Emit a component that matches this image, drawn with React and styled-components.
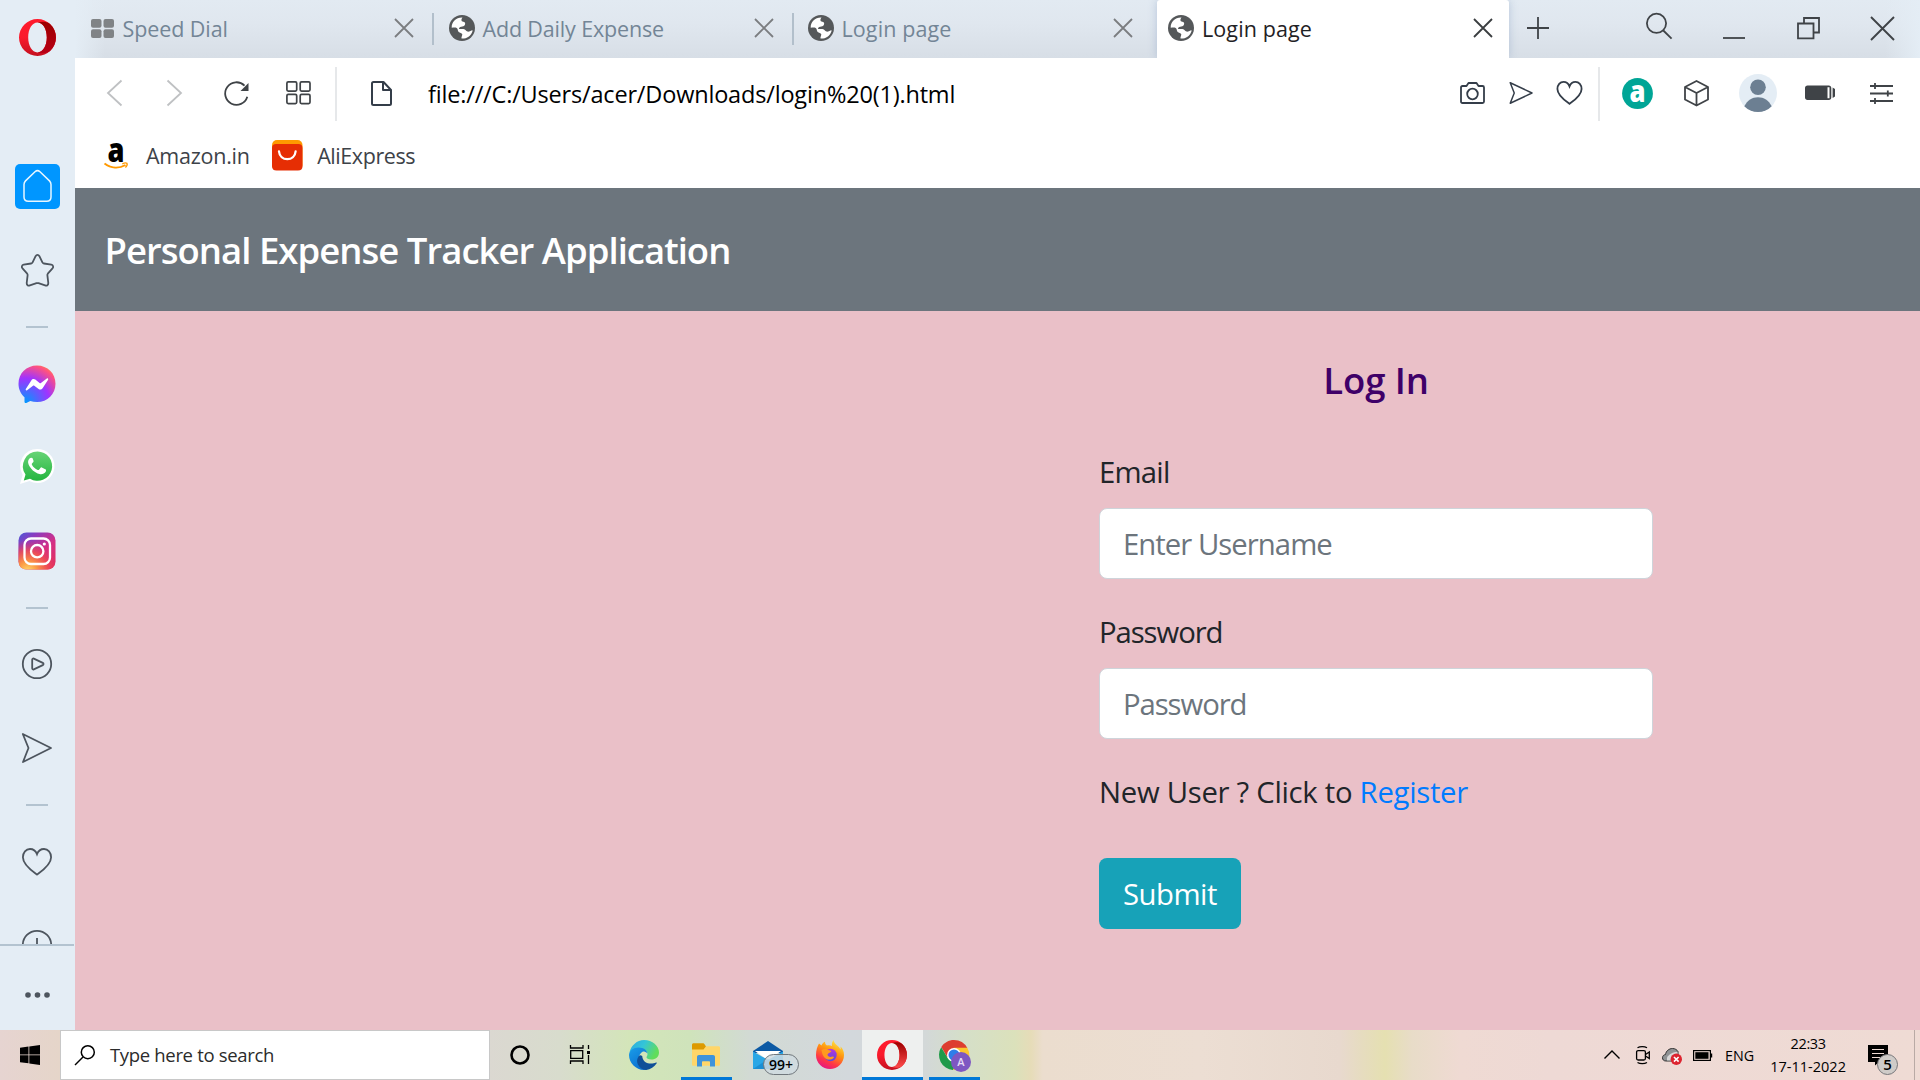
import React from "react";
import styled, { createGlobalStyle, css } from "styled-components";

const GlobalStyle = createGlobalStyle`
  *, *::before, *::after { box-sizing: border-box; }
  body {
    margin: 0;
    overflow: hidden;
    font-family: "Open Sans", "Noto Sans", "Liberation Sans", sans-serif;
    color: #212529;
  }
`;

/* ---------- layout ---------- */

const Screen = styled.div`
  display: flex;
  flex-direction: column;
  width: 1920px;
  height: 1080px;
  background: #e4edf5;
`;

const Browser = styled.div`
  display: flex;
  flex: 1;
  min-height: 0;
`;

const Main = styled.main`
  flex: 1;
  min-width: 0;
  display: flex;
  flex-direction: column;
`;

const Text = styled.span`
  white-space: pre;
  font-size: ${(p) => p.$size}px;
  line-height: ${(p) => p.$line || p.$size * 1.4}px;
  letter-spacing: ${(p) => p.$track || 0}px;
  color: ${(p) => p.$color || "#000"};
`;

const Glyph = styled.svg`
  display: block;
  flex: none;
  overflow: visible;
  margin-left: ${(p) => p.$gap || 0}px;
  margin-top: ${(p) => p.$drop || 0}px;
`;

const Icon = ({ w, h, box, gap, drop, color = "#3f4347", sw = 1.8, fill = "none", children }) => (
  <Glyph
    width={w}
    height={h}
    viewBox={box || `0 0 ${w} ${h}`}
    fill={fill}
    stroke={color}
    strokeWidth={sw}
    $gap={gap}
    $drop={drop}
  >
    {children}
  </Glyph>
);

/* ---------- sidebar ---------- */

const Sidebar = styled.aside`
  width: 75px;
  flex: none;
  display: flex;
  flex-direction: column;
  background: #e4edf5;
`;

const LogoSlot = styled.div`
  height: 143px;
  padding-top: 19px;
  display: flex;
  justify-content: center;
`;

const PanelList = styled.div`
  width: 74px;
  height: 801px;
  overflow: hidden;
  display: flex;
  flex-direction: column;
`;

const Slot = styled.div`
  height: ${(p) => p.$h || 84}px;
  flex: none;
  display: flex;
  align-items: center;
  justify-content: center;
`;

const Rule = styled.div`
  width: 22px;
  height: 2px;
  background: #b3c3d0;
`;

const HomeTile = styled.div`
  width: 45px;
  height: 45px;
  border-radius: 5px;
  background: #0096ff;
  display: grid;
  place-items: center;
`;

const SidebarFooter = styled.div`
  flex: 1;
  width: 74px;
  border-top: 2px solid #b3c3d0;
  display: flex;
  justify-content: center;
  padding-top: 46px;
`;

const OperaLogo = ({ w, h, id }) => (
  <Icon w={w} h={h} box="0 0 37 37" color="none">
    <defs>
      <linearGradient id={`${id}a`} x1="0" y1="0" x2="0" y2="1">
        <stop offset="0" stopColor="#ff1b2d" />
        <stop offset="0.5" stopColor="#fa1a2c" />
        <stop offset="1" stopColor="#c4101f" />
      </linearGradient>
      <linearGradient id={`${id}b`} x1="0" y1="0" x2="0" y2="1">
        <stop offset="0" stopColor="#9c0000" />
        <stop offset="1" stopColor={id === "side" ? "#b80016" : "#ff4b4b"} />
      </linearGradient>
    </defs>
    <path
      fill={`url(#${id}a)`}
      fillRule="evenodd"
      d="M18.500 0a18.500 18.500 0 1 0 0 37a18.500 18.500 0 1 0 0-37zM18.500 3.600c5.500 0 9.300 6.600 9.300 14.900s-3.800 14.900-9.300 14.900S9.200 26.800 9.200 18.500S13 3.600 18.500 3.600z"
    />
    <path
      fill={`url(#${id}b)`}
      d="M18.500 3.600C24 3.600 27.800 10.200 27.800 18.500S24 33.400 18.500 33.400C22.500 34.600 27.500 34.400 30.800 32.300A18.500 18.500 0 0 0 30.800 4.700C27.500 2.600 22.500 2.400 18.500 3.600z"
    />
  </Icon>
);

const Messenger = () => (
  <Icon w={38} h={38} color="none">
    <defs>
      <radialGradient id="msgr" cx="0.19" cy="0.99" r="1.09">
        <stop offset="0" stopColor="#09f" />
        <stop offset="0.6" stopColor="#a033ff" />
        <stop offset="0.93" stopColor="#ff5280" />
        <stop offset="1" stopColor="#ff7061" />
      </radialGradient>
    </defs>
    <path
      fill="url(#msgr)"
      d="M19 .5C8.400.5.500 8.300.500 18.700c0 5.500 2.300 10.200 6 13.500v4.500c0 1 .9 1.500 1.800 1.200l4-1.800c2 .6 4.300.900 6.700.900C29.600 37 37.500 29.100 37.500 18.700S29.600.5 19 .5z"
    />
    <path
      fill="#fff"
      d="M7.800 24.100 13.300 15.400c.9-1.400 2.700-1.700 4-.8l4.300 3.300c.4.300.9.300 1.300 0l5.900-4.400c.8-.6 1.800.3 1.300 1.200l-5.500 8.600c-.9 1.400-2.700 1.700-4 .8l-4.300-3.300c-.4-.3-.9-.3-1.300 0l-5.900 4.500c-.8.600-1.800-.3-1.300-1.200z"
    />
  </Icon>
);

const WhatsApp = () => (
  <Icon w={34} h={36} color="none">
    <defs>
      <linearGradient id="wa" x1="0" y1="0" x2="0" y2="1">
        <stop offset="0" stopColor="#67d475" />
        <stop offset="1" stopColor="#25b540" />
      </linearGradient>
    </defs>
    <path fill="#fff" d="M17.500 0a17 17 0 0 1 0 34c-3 0-5.600-.7-8-2L0 35l2.700-9.200A17 17 0 0 1 17.500 0z" />
    <path
      fill="url(#wa)"
      d="M17.500 2.600a14.600 14.600 0 1 1-7.500 27.100L3.800 31.500l1.700-6A14.600 14.600 0 0 1 17.500 2.600z"
    />
    <path
      fill="#fff"
      d="M12.600 9.300c-.4-.8-2.300-.8-3.100.2-1.400 1.500-1.800 3.500-1 5.700 2 4.800 6 8.300 11 9.800 2.200.6 5-.2 6.200-2.200.5-1 .4-2 .1-2.300l-4-2.100c-.6-.2-1 0-1.400.5l-1.400 1.800c-.4.400-.8.400-1.300.2-2.500-1.100-4.500-2.900-5.800-5.200-.2-.4-.2-.8.100-1.200l1.300-1.600c.3-.4.400-.8.200-1.200z"
    />
  </Icon>
);

const Instagram = () => (
  <Icon w={38} h={38} color="#fff" sw={2.300}>
    <defs>
      <linearGradient id="igBase" x1="0" y1="0" x2="0.9" y2="1">
        <stop offset="0" stopColor="#4a5bd8" />
        <stop offset="0.25" stopColor="#8a3cc0" />
        <stop offset="0.6" stopColor="#d42f86" />
        <stop offset="1" stopColor="#e02f5c" />
      </linearGradient>
      <radialGradient id="igGlow" cx="0.25" cy="1.05" r="0.85">
        <stop offset="0" stopColor="#ffdc6b" />
        <stop offset="0.3" stopColor="#fb9a45" />
        <stop offset="0.65" stopColor="#f2504f" stopOpacity="0.8" />
        <stop offset="1" stopColor="#e0306c" stopOpacity="0" />
      </radialGradient>
    </defs>
    <rect x=".5" y=".5" width="37" height="37" rx="8" fill="url(#igBase)" stroke="none" />
    <rect x=".5" y=".5" width="37" height="37" rx="8" fill="url(#igGlow)" stroke="none" />
    <rect x="6.500" y="6.500" width="25.500" height="25.500" rx="6.500" />
    <circle cx="19.200" cy="19.200" r="6.200" />
    <circle cx="26.300" cy="12" r="1.600" fill="#fff" stroke="none" />
  </Icon>
);

const SIDE = "#4d555e";
const HEART = "M15 26.600C11.500 24 .9 17.200.9 9.300.9 4.600 4 1 8 1c3.200 0 5.800 2 7 5.200C16.200 3 18.800 1 22 1c4 0 7.100 3.600 7.100 8.300 0 7.900-10.600 14.700-14.100 17.300z";
const PLANE = "M.8 1 29 15 1 29l5.500-14z";

const SideBar = () => (
  <Sidebar>
    <LogoSlot><OperaLogo w={37} h={37} id="side" /></LogoSlot>
    <PanelList>
      <Slot $h={86}>
        <HomeTile>
          <Icon w={29} h={32} color="#e8f6ff" sw={1.500}>
            <path d="M1 14.500c0-1.500.5-2.600 1.500-3.600l9.500-9.200c1.600-1.400 3.400-1.400 5 0l9.500 9.200c1 1 1.500 2.100 1.500 3.600V27c0 2.800-1.500 4.200-4.200 4.200H5.200C2.500 31.200 1 29.800 1 27z" />
          </Icon>
        </HomeTile>
      </Slot>
      <Slot $h={82}>
        <Icon w={33} h={33} color={SIDE} sw={1.800}>
          <path strokeLinejoin="round" d="M14.600 2.200c1-1.700 2.800-1.700 3.800 0l3 6.200c.3.600.8 1 1.500 1.100l7.400 1.200c1.900.4 2.500 2.300 1.200 3.700l-4.700 5.300c-.4.500-.5 1-.4 1.700l.9 7.600c.1 2-1.400 3.100-3.200 2.400l-6.600-2.200c-.7-.2-1.300-.2-2 0l-6.600 2.200c-1.800.7-3.300-.4-3.200-2.400l.9-7.600c.1-.7 0-1.200-.4-1.700l-4.700-5.300c-1.300-1.400-.7-3.300 1.200-3.700l7.400-1.200c.7-.1 1.200-.5 1.500-1.100z" />
        </Icon>
      </Slot>
      <Slot $h={31}><Rule /></Slot>
      <Slot $h={83}><Messenger /></Slot>
      <Slot><WhatsApp /></Slot>
      <Slot><Instagram /></Slot>
      <Slot $h={29}><Rule /></Slot>
      <Slot>
        <Icon w={30} h={30} color={SIDE} sw={1.800}>
          <circle cx="15" cy="15" r="14.200" />
          <path strokeLinejoin="round" d="M10.200 10.700c0-1 .8-1.500 1.600-1.100l9 4.300c1 .5 1 1.700 0 2.200l-9 4.300c-.8.400-1.600-.1-1.600-1.100z" />
        </Icon>
      </Slot>
      <Slot>
        <Icon w={30} h={30} color={SIDE} sw={1.800}><path strokeLinejoin="round" d={PLANE} /></Icon>
      </Slot>
      <Slot $h={29}><Rule /></Slot>
      <Slot $h={86}>
        <Icon w={30} h={28} color={SIDE} sw={1.800}><path d={HEART} /></Icon>
      </Slot>
      <Slot $h={79}>
        <Icon w={30} h={30} color={SIDE} sw={1.800}>
          <circle cx="15" cy="15" r="14.200" />
          <path d="M15 8v10" />
        </Icon>
      </Slot>
    </PanelList>
    <SidebarFooter>
      <Icon w={25} h={6} color="none" fill={SIDE}>
        <circle cx="3" cy="3" r="2.800" />
        <circle cx="12.500" cy="3" r="2.800" />
        <circle cx="22" cy="3" r="2.800" />
      </Icon>
    </SidebarFooter>
  </Sidebar>
);

/* ---------- tab strip ---------- */

const TabStrip = styled.header`
  height: 58px;
  display: flex;
  background: linear-gradient(90deg, #e4edf5 0, rgba(228, 237, 245, 0) 30px, rgba(228, 237, 245, 0) 1810px, #e4edf5 100%),
    linear-gradient(#e2eaf2 0, #e0e7ef 40%, #d7dee6 100%);
`;

const Tab = styled.div`
  width: ${(p) => p.$w}px;
  display: flex;
  align-items: center;
  padding: 0 ${(p) => p.$right}px 2px ${(p) => p.$left}px;
  ${(p) =>
    p.$active &&
    css`
      background: #fff;
      border-radius: 3px 3px 0 0;
      box-shadow: 0 0 8px rgba(130, 155, 190, 0.45);
      clip-path: inset(0 -10px 0 -10px);
    `}
`;

const TabTitle = styled(Text)`
  flex: 1;
  margin-left: ${(p) => p.$gap || 8}px;
  padding-top: 3px;
`;

const TabDivider = styled.i`
  width: 2px;
  height: 32px;
  margin-top: 13px;
  background: #b2bfcb;
`;

const Globe = () => (
  <Icon w={26} h={26} color="none">
    <circle cx="13" cy="13" r="13" fill="#55585a" />
    <path
      fill="#fff"
      d="M13.500 2.600c-.8 1-1.200 2-1 3 .3 1.300 1.600 1.200 2.600 1.400 1.300.3 1.200 1.700.8 2.700-.6 1.500-2.300 1.700-3.700 2-1.500.3-2.200 1-2.200 2.300l4.500 0c2.200.2 2.400 2 3.900 2.500 1.500.5 2.700-.6 4.700-1.300.5 0 .5.600.3 1.200-1.500 4.500-5.600 7.300-10.300 7.200-.6-.1-.8-.6-.6-1.200.3-1.300 1-2.300.7-3.300-.4-1.200-2.400-1.200-3.500-2.200-1.300-1.200-.6-3-2-3.900-1.500-.8-3.200-.4-5-.2C2.500 6.800 7 2.400 13.500 2.600z"
    />
  </Icon>
);

const Cross = ({ size = 18, h, color = "#7b7d80", sw = 1.800 }) => (
  <Icon w={size} h={h || size} box="0 0 18 18" color={color} sw={sw}>
    <path d="M0 0 18 18M18 0 0 18" />
  </Icon>
);

const WindowTools = styled.div`
  flex: 1;
  display: flex;
  align-items: flex-start;
  padding-left: 18px;
`;

const MUTED = "#738596";

const Tabs = () => (
  <TabStrip>
    <Tab $w={357} $left={16} $right={19}>
      <Icon w={23} h={19} color="none" fill="#808386">
        <rect width="10.500" height="8.700" rx="2" />
        <rect x="12.500" width="10.500" height="8.700" rx="2" />
        <rect y="10.300" width="10.500" height="8.700" rx="2" />
        <rect x="12.500" y="10.300" width="10.500" height="8.700" rx="2" />
      </Icon>
      <TabTitle $size={21.500} $gap={8.500} $track={-0.080} $color={MUTED}>Speed Dial</TabTitle>
      <Cross />
    </Tab>
    <TabDivider />
    <Tab $w={358} $left={14.500} $right={19}>
      <Globe />
      <TabTitle $size={21.500} $track={-0.160} $color={MUTED}>Add Daily Expense</TabTitle>
      <Cross />
    </Tab>
    <TabDivider />
    <Tab $w={363} $left={13.500} $right={25}>
      <Globe />
      <TabTitle $size={21.500} $track={0.100} $color={MUTED}>Login page</TabTitle>
      <Cross />
    </Tab>
    <Tab $w={352} $left={11} $right={17} $active>
      <Globe />
      <TabTitle $size={21.500} $track={0.100} $color="#1f2225">Login page</TabTitle>
      <Cross color="#3a3d40" />
    </Tab>
    <WindowTools>
      <Icon w={22} h={22} drop={17}><path d="M11 0v22M0 11h22" /></Icon>
      <Icon w={26} h={26} gap={97} drop={13}>
        <circle cx="10.500" cy="10.300" r="9.600" />
        <path d="M17.300 17.500 25.600 25.600" />
      </Icon>
      <Icon w={22} h={2} gap={51} drop={37}><path d="M0 1h22" /></Icon>
      <Icon w={23} h={22} gap={51.500} drop={17}>
        <path d="M1 6.500h15.500v14.800H1zM7 6V1h15v14.500h-5" />
      </Icon>
      <Glyph width={23} height={23} viewBox="0 0 18 18" stroke="#3f4347" strokeWidth={1.500} $gap={51.500} $drop={17}>
        <path d="M0 0 18 18M18 0 0 18" />
      </Glyph>
    </WindowTools>
  </TabStrip>
);

/* ---------- address bar and bookmarks ---------- */

const AddressBar = styled.div`
  height: 70px;
  display: flex;
  align-items: center;
  background: #fff;
  padding: 0 27.500px 0 32px;
`;

const BarDivider = styled.i`
  width: 2px;
  height: 54px;
  margin: 2px ${(p) => p.$right}px 0 ${(p) => p.$left}px;
  background: #e6e8ea;
`;

const Url = styled(Text)`
  flex: 1;
  margin-left: 36px;
  padding-top: 2px;
`;

const Bookmarks = styled.nav`
  height: 60px;
  display: flex;
  align-items: center;
  background: #fff;
  padding: 0 0 5px 29px;
`;

const BookmarkName = styled(Text)`
  margin: 0 ${(p) => p.$after || 0}px 0 ${(p) => p.$before}px;
  padding-top: 1px;
`;

const Toolbar = () => (
  <AddressBar>
    <Icon w={15} h={26} color="#bfc1c3" sw={1.800}><path d="M14.500.5 1 13l13.500 12.500" /></Icon>
    <Icon w={15} h={26} gap={45} color="#bfc1c3" sw={1.800}><path d="M.5.5 14 13 .5 25.500" /></Icon>
    <Icon w={25} h={25} gap={42} color="#3f4347">
      <path d="M23.300 15.800A11.300 11.300 0 1 1 20.500 4.600" />
      <path d="M24.500 2v8h-8z" fill="#3f4347" stroke="none" />
    </Icon>
    <Icon w={25} h={24} gap={37} color="#3f4347" sw={1.700}>
      <rect x=".9" y=".9" width="9.800" height="9.200" rx="1.300" />
      <rect x="14.200" y=".9" width="9.800" height="9.200" rx="1.300" />
      <rect x=".9" y="13.400" width="9.800" height="9.200" rx="1.300" />
      <rect x="14.200" y="13.400" width="9.800" height="9.200" rx="1.300" />
    </Icon>
    <BarDivider $left={24} $right={34} />
    <Icon w={21} h={25} color="#343d49" sw={2}>
      <path strokeLinejoin="round" d="M1 2.500C1 1.500 1.500 1 2.500 1H12.500L20 9v13.500c0 1-.5 1.500-1.500 1.500h-16C1.500 24 1 23.500 1 22.500zM12 1.500V9h7.500" />
    </Icon>
    <Url $size={23.500} $track={-0.180}>file:///C:/Users/acer/Downloads/login%20(1).html</Url>
    <Icon w={25} h={22} color="#343d49">
      <path strokeLinejoin="round" d="M1 5.500C1 4.500 1.500 4 2.500 4H6.500L8.500 1h8l2 3h4c1 0 1.500.5 1.500 1.500v14c0 1-.5 1.500-1.500 1.500h-20C1.500 21 1 20.500 1 19.500z" />
      <circle cx="12.500" cy="12" r="5.300" />
    </Icon>
    <Icon w={24} h={22} gap={24} box="0 0 30 30" color="#343d49" sw={2}>
      <path strokeLinejoin="round" d="M.3 1 30 15 .3 29l5.500-14z" />
    </Icon>
    <Icon w={27} h={24} gap={23} box="0 0 30 28" color="#343d49" sw={2.100}><path d={HEART} /></Icon>
    <BarDivider $left={15} $right={22.500} />
    <Icon w={31} h={31} color="none">
      <circle cx="15.500" cy="15.500" r="15.400" fill="#00a596" />
      <text x="15.500" y="23.800" textAnchor="middle" fontFamily="Open Sans, sans-serif" fontWeight="800" fontSize="30" textLength="16" lengthAdjust="spacingAndGlyphs" fill="#fff">a</text>
    </Icon>
    <Icon w={25} h={26} gap={31}>
      <path strokeLinejoin="round" d="M12.500 1 24 7v12.500l-11.500 6L1 19.500V7zM1 7l11.500 6L24 7M12.500 13v12.500" />
    </Icon>
    <Icon w={38} h={38} gap={29.500} color="none">
      <circle cx="19" cy="19" r="19" fill="#e4edf5" />
      <circle cx="19" cy="13.200" r="7.800" fill="#6c7f92" />
      <path fill="#6c7f92" d="M5.300 32.200C8.500 26.500 13 23.300 19 23.300s10.500 3.200 13.700 8.900A19 19 0 0 1 5.300 32.200z" />
    </Icon>
    <Icon w={31} h={16} gap={28} color="none" fill="#3f4347">
      <path fillRule="evenodd" d="M2.500.5h21.300c1.500 0 2.500 1 2.500 2.500v9.500c0 1.500-1 2.500-2.500 2.500H2.500C1 15 0 14 0 12.500V3C0 1.500 1 .5 2.500.5zM22.500 2.300v11h2V2.300z" />
      <path d="M27.600 2.500l2.400 1.500v7.500l-2.400 1.500z" />
    </Icon>
    <Icon w={23} h={21} gap={34}>
      <path d="M0 3h23M0 10.500h23M0 18h23M5 0v6M17.800 7.500v6M5 15v6" />
    </Icon>
  </AddressBar>
);

const BookmarkBar = () => (
  <Bookmarks>
    <Icon w={24} h={26} color="none">
      <text x="12" y="19" textAnchor="middle" fontFamily="Open Sans, sans-serif" fontWeight="800" fontSize="34" textLength="17" lengthAdjust="spacingAndGlyphs" fill="#000">a</text>
      <path d="M.5 20.500C7 25.300 15 25.600 21.500 22" fill="none" stroke="#f90" strokeWidth="2" />
      <path d="M18.300 20.800c2-.9 4-.9 4.700-.4.400.9-.3 2.800-1.600 4" fill="none" stroke="#f90" strokeWidth="1.300" />
    </Icon>
    <BookmarkName $before={18} $after={22} $size={21.500} $track={-0.250} $color="#3d4248">Amazon.in</BookmarkName>
    <Icon w={31} h={31} color="none">
      <rect width="30.500" height="30" rx="5" fill="#ff9900" />
      <path fill="#e62e04" d="M0 8c0-2.500 1.500-4 4-4h22.500c2.500 0 4 1.500 4 4v18c0 3-1.500 4.500-4.500 4.500H4.500C1.500 30.500 0 29 0 26z" />
      <path d="M7 11.500c.5 5 4 7.700 8.300 7.700s7.800-2.700 8.300-7.700" fill="none" stroke="#fff" strokeWidth="2.300" strokeLinecap="round" />
    </Icon>
    <BookmarkName $before={14.500} $size={21.500} $track={-0.420} $color="#3d4248">AliExpress</BookmarkName>
  </Bookmarks>
);

/* ---------- login page ---------- */

const PageHeader = styled.div`
  height: 123px;
  padding: 2px 0 0 29.500px;
  display: flex;
  align-items: center;
  background: #6c757d;
`;

const AppTitle = styled.h5`
  margin: 0;
  font-size: 36.500px;
  line-height: 45px;
  font-weight: 600;
  letter-spacing: -0.980px;
  color: #fff;
`;

const Page = styled.section`
  flex: 1;
  display: flex;
  padding: 47px 0 0 1024px;
  background: #eac0c8;
`;

const LoginForm = styled.form`
  width: 554px;
  display: flex;
  flex-direction: column;
`;

const FormTitle = styled.h5`
  margin: 0 0 47px;
  text-align: center;
  font-size: 36.500px;
  line-height: 45px;
  font-weight: 600;
  letter-spacing: -0.100px;
  color: #3f0068;
`;

const Label = styled.label`
  margin-bottom: 13px;
  font-size: 29.300px;
  line-height: 45px;
  letter-spacing: ${(p) => p.$track}px;
`;

const Field = styled.input`
  height: 71px;
  margin: 0 0 31px;
  padding: 1px 23px 0;
  border: 1px solid #ced4da;
  border-radius: 8px;
  outline: none;
  background: #fff;
  font: 29.300px "Open Sans", sans-serif;
  letter-spacing: ${(p) => p.$track}px;
  &::placeholder { color: #6c757d; opacity: 1; }
`;

const Hint = styled.p`
  margin: 0 0 43px;
  font-size: 29.300px;
  line-height: 45px;
  letter-spacing: -0.290px;
  white-space: nowrap;
`;

const Link = styled.a`
  color: #007bff;
  text-decoration: none;
`;

const Submit = styled.button`
  align-self: flex-start;
  width: 142px;
  height: 71px;
  padding: 1px 0 0;
  border: 0;
  border-radius: 8px;
  background: #17a2b8;
  color: #fff;
  font: 29.300px "Open Sans", sans-serif;
  letter-spacing: -0.500px;
`;

/* ---------- taskbar ---------- */

const Taskbar = styled.footer`
  height: 50px;
  flex: none;
  display: flex;
  background: linear-gradient(
    90deg,
    #e6d4d1 0, #e5d5c9 60px, #dbd8d1 489px, #d8dccd 560px, #d3e5b9 630px, #cfe3bb 690px,
    #d2dad4 750px, #d3d8dc 850px, #d3d8d8 925px, #d5dfc8 965px, #dbe1bb 1015px,
    #e6dcb8 1031px, #ebddce 1043px, #ecded3 1200px, #e8d9ce 1340px, #e6dcbf 1362px,
    #e5e0b1 1385px, #e8dcc8 1412px, #efdad3 1460px, #eed9d5 1550px, #efdbd4 1920px
  );
`;

const StartButton = styled.div`
  width: 60px;
  padding: 15px 0 0 20px;
`;

const SearchBox = styled.div`
  width: 430px;
  border: 1px solid #c8c8c8;
  background: #fff;
  display: flex;
  align-items: center;
  padding: 0 0 0 14px;
  gap: 15px;
`;

const TaskItem = styled.div`
  width: ${(p) => p.$w}px;
  margin-left: ${(p) => p.$gap || 0}px;
  padding-left: ${(p) => p.$left || 0}px;
  padding-top: ${(p) => p.$top}px;
  background: ${(p) => (p.$active ? "#eef0ef" : "transparent")};
  box-shadow: ${(p) => (p.$open ? "inset 0 -3px #0078d7" : "none")};
`;

const MailItem = styled(TaskItem)`
  position: relative;
`;

const MailBadge = styled.span`
  position: absolute;
  left: 10px;
  top: 24px;
  width: 36px;
  height: 21px;
  border: 1px solid #70777c;
  border-radius: 11px;
  background: rgba(208, 219, 224, 0.85);
  color: #000;
  font-size: 14px;
  font-weight: 600;
  line-height: 19px;
  text-align: center;
`;

const Tray = styled.div`
  flex: 1;
  display: flex;
  align-items: flex-start;
  padding-left: 624px;
`;

const Clock = styled.div`
  width: 76px;
  margin-left: 16px;
  padding-top: 2px;
  display: flex;
  flex-direction: column;
  align-items: center;
`;

const TrayText = styled(Text)`
  margin: ${(p) => p.$drop || 0}px 0 0 ${(p) => p.$gap || 0}px;
`;

const ShowDesktop = styled.i`
  width: 1px;
  height: 50px;
  margin-left: 15px;
  background: #b9aaa5;
`;

const TaskBar = () => (
  <Taskbar>
    <StartButton>
      <Icon w={20} h={20} color="none" fill="#000">
        <path d="M0 2.800 8.500 1.600V9.500H0zM9.300 1.500 20 0v9.500H9.300zM0 10.300h8.500v8L0 17.200zM9.300 10.300H20V20L9.300 18.500z" />
      </Icon>
    </StartButton>
    <SearchBox>
      <Icon w={20} h={20} color="#000" sw={1.500}>
        <circle cx="12.800" cy="7.200" r="6.500" />
        <path d="M8 12 0 20" />
      </Icon>
      <Text $size={18.500} $track={-0.330} $color="#2b2b2b">Type here to search</Text>
    </SearchBox>
    <TaskItem $w={20} $gap={20} $top={15}>
      <Icon w={20} h={20} color="#000" sw={2.600}><circle cx="10" cy="10" r="8.500" /></Icon>
    </TaskItem>
    <TaskItem $w={20} $gap={40} $top={15}>
      <Icon w={20} h={19} color="#000" sw={1.300}>
        <path d="M.5 0v3h12.500V0M.5 19v-3h12.500V19M.7 5.700h12v7.600H.7zM18.500 0v4M18.500 10v9" />
        <rect x="17" y="6" width="3" height="3" fill="#000" stroke="none" />
      </Icon>
    </TaskItem>
    <TaskItem $w={30} $gap={39} $top={10}>
      <Icon w={30} h={30} color="none">
        <defs>
          <linearGradient id="edgeTop" x1="0" y1="0" x2="1" y2="0.4">
            <stop offset="0" stopColor="#2aa8e0" />
            <stop offset="0.5" stopColor="#34c5d8" />
            <stop offset="1" stopColor="#62dd5a" />
          </linearGradient>
          <linearGradient id="edgeBody" x1="0" y1="0" x2="0.6" y2="1">
            <stop offset="0" stopColor="#1a9de8" />
            <stop offset="1" stopColor="#0a6fd0" />
          </linearGradient>
        </defs>
        <path fill="url(#edgeTop)" d="M.5 12.500C2 5.500 8 0 15 0c8.500 0 15 6 15 12.500 0 4.500-3.500 7-7.500 7-3.500 0-5-1.200-5-2.200 0-.8 1-1.300 1-3.300 0-3-3-5-7.500-5-4 0-8 1.500-10.500 3.500z" />
        <path fill="url(#edgeBody)" d="M0 15C0 10.500 4.500 7.500 9.500 7.500c5.300 0 8.700 2.800 8.900 6-1.200-1.400-2.700-2-4.400-2-3.500 2-4.500 5-4 8.500.7 5 4.500 8.500 8.500 9.300-1 .4-2.200.6-3.500.7C7 30 0 23 0 15z" />
        <path fill="#0f4f98" d="M9.900 16c-1.900 2.400-2.500 5.500-1 8.500 1.800 3.600 5 5.500 8.200 5.400 4.500-.5 8.200-3 10.600-6.700.3-.5-.1-1-.7-.7-4.500 2.200-13.100 1.700-13.800-6.500-1.500-1-2.500-.9-3.300 0z" />
      </Icon>
    </TaskItem>
    <TaskItem $w={51} $gap={22} $left={11} $top={13} $open>
      <Icon w={28} h={24} color="none">
        <path d="M0 2C0 .8.600.200 1.700.200h9c1 0 1.500.5 2 1.300L14 3.500V8H0z" fill="#dd9a00" />
        <path d="M0 6.500h11.500L14 3.300h12.500c1 0 1.500.5 1.500 1.500v16.500c0 1-.5 1.500-1.500 1.500H1.500c-1 0-1.500-.5-1.500-1.500z" fill="#ffd669" />
        <path d="M5 23.500v-9.500c0-1.200.8-2 2-2h14c1.200 0 2 .8 2 2v9.500h-5v-4.500c0-.5-.3-.8-.8-.8h-6.400c-.5 0-.8.3-.8.800v4.500z" fill="#3f93da" />
      </Icon>
    </TaskItem>
    <MailItem $w={30} $gap={21} $top={11}>
      <Icon w={30} h={29} color="none">
        <path d="M0 10 15 0l15 10v2H0z" fill="#0c59a4" />
        <path d="M2 10h26L15 19.500z" fill="#fff" />
        <path d="M0 10.500 15 19 30 10.500V28H0z" fill="#2aa7e6" />
        <path d="M0 28 15 18 30 28z" fill="#1b8fd4" />
      </Icon>
      <MailBadge>99+</MailBadge>
    </MailItem>
    <TaskItem $w={28} $gap={33} $top={10}>
      <Icon w={28} h={30} color="none">
        <defs>
          <linearGradient id="fox" x1="0.8" y1="0" x2="0.3" y2="1">
            <stop offset="0" stopColor="#fff04f" />
            <stop offset="0.4" stopColor="#ff980e" />
            <stop offset="0.75" stopColor="#ff3647" />
            <stop offset="1" stopColor="#e31587" />
          </linearGradient>
          <linearGradient id="foxCore" x1="0" y1="0" x2="0" y2="1">
            <stop offset="0" stopColor="#b833e1" />
            <stop offset="1" stopColor="#5b4bdc" />
          </linearGradient>
        </defs>
        <path fill="url(#fox)" d="M17.500 0c-1 1.500-2 3.500-1.500 6-1.500-.8-3.500-1-5-.4C9.500 4.700 9 3.300 9 1.800 7.500 2.300 6 3.800 5.500 5.500L3 3.500C1.500 6 0 10 0 15c0 8 6.500 14 14 14s14-6 14-14c0-4-1.500-6.500-3.500-8.500.3 1.200.3 2.200 0 3C23 5.500 18 4.500 17.500 0z" />
        <circle cx="14.500" cy="15" r="6.200" fill="url(#foxCore)" />
        <path fill="#ff9a1f" d="M5.500 10c2-1.500 5.500-1.500 7 0l3 1c-.5 1.500-3.500 2-4 3.500 0 2 2.500 3 5 2 1-.4 2 .5 1 1.500-2.500 2.500-7.500 2-9.500-1S6 12 5.500 10z" />
      </Icon>
    </TaskItem>
    <TaskItem $w={61} $gap={18} $left={15} $top={10} $open $active>
      <OperaLogo w={30} h={30} id="task" />
    </TaskItem>
    <TaskItem $w={51} $gap={6} $left={10} $top={10} $open>
      <Icon w={32} h={32} color="none">
        <path fill="#dd3e30" d="M15 0C9.700 0 5 2.700 2.300 7L8.500 17.500 15 8h13.300A15 15 0 0 0 15 0z" />
        <path fill="#209a4a" d="M2.200 7.200A15 15 0 0 0 14 30l5.500-10.500L8.700 18z" />
        <path fill="#fcc62f" d="M14.500 7.800h13.800A15 15 0 0 1 14 30l7.500-12z" />
        <circle cx="15" cy="15" r="7" fill="#fff" />
        <circle cx="15" cy="15" r="5.500" fill="#2f7de9" />
        <circle cx="22" cy="22" r="10" fill="#7e57c2" />
        <text x="22" y="26" textAnchor="middle" fontFamily="Open Sans, sans-serif" fontWeight="600" fontSize="11" fill="#e6dcf5">A</text>
      </Icon>
    </TaskItem>
    <Tray>
      <Icon w={16} h={9} drop={20} color="#000" sw={1.400}><path d="M.5 8.500 8 1l7.500 7.500" /></Icon>
      <Icon w={14} h={18} drop={16} gap={16} color="#000" sw={1.300}>
        <rect x=".6" y="4.600" width="8.800" height="9.400" rx="1.500" />
        <path d="M9.500 8.500 13.300 6v6.500L9.500 10M1.500 1.700C4 .2 8.500.2 11 1.700M1.500 16.500C4 18 8.500 18 11 16.500" />
      </Icon>
      <Icon w={21} h={18} drop={17} gap={12} color="none">
        <path d="M4 14C1.500 14 .5 12.500.5 10.800.5 9 1.700 7.800 3.500 7.500 4 4 7 1.500 10.500 1.500c2.500 0 4.500 1.300 5.500 3V14z" fill="#8f9294" stroke="#333" strokeWidth="1" />
        <path d="M5 10.500C7 7 11 5 15.500 5v3L9 13.500H5z" fill="#d8d8d8" />
        <circle cx="14.300" cy="12.300" r="5.700" fill="#dd2430" />
        <path d="M12 10l4.600 4.600M16.600 10 12 14.600" stroke="#fff" strokeWidth="1.600" />
      </Icon>
      <Icon w={20} h={11} drop={20} gap={10} color="#000" sw={1.200}>
        <rect x=".6" y=".6" width="16.800" height="9.800" />
        <rect x="2.300" y="2.200" width="13.200" height="6.600" fill="#000" stroke="none" />
        <path d="M18.600 3.500v4" />
      </Icon>
      <TrayText $size={14.300} $line={20} $drop={16} $gap={12}>ENG</TrayText>
      <Clock>
        <TrayText $size={14.500} $line={23} $track={-0.400}>22:33</TrayText>
        <TrayText $size={14.500} $line={23}>17-11-2022</TrayText>
      </Clock>
      <Icon w={31} h={31} gap={22} drop={15} color="none">
        <path d="M0 0h20v17h-9L7 20.500V17H0z" fill="#000" />
        <path d="M4 4.500h12M4 8.500h12M4 12.500h8" stroke="#efdbd4" strokeWidth="1.200" />
        <circle cx="19.500" cy="19.500" r="10" fill="#cfcbc8" stroke="#77777a" strokeWidth="1" />
        <text x="19.500" y="24.800" textAnchor="middle" fontFamily="Open Sans, sans-serif" fontWeight="600" fontSize="15" fill="#000">5</text>
      </Icon>
      <ShowDesktop />
    </Tray>
  </Taskbar>
);

export default function App() {
  return (
    <Screen>
      <GlobalStyle />
      <Browser>
        <SideBar />
        <Main>
          <Tabs />
          <Toolbar />
          <BookmarkBar />
          <PageHeader>
            <AppTitle>Personal Expense Tracker Application</AppTitle>
          </PageHeader>
          <Page>
            <LoginForm>
              <FormTitle>Log In</FormTitle>
              <Label $track={-0.800}>Email</Label>
              <Field $track={-0.960} placeholder="Enter Username" />
              <Label $track={-1.080}>Password</Label>
              <Field $track={-1.080} placeholder="Password" />
              <Hint>New User ? Click to <Link>Register</Link></Hint>
              <Submit type="button">Submit</Submit>
            </LoginForm>
          </Page>
        </Main>
      </Browser>
      <TaskBar />
    </Screen>
  );
}
